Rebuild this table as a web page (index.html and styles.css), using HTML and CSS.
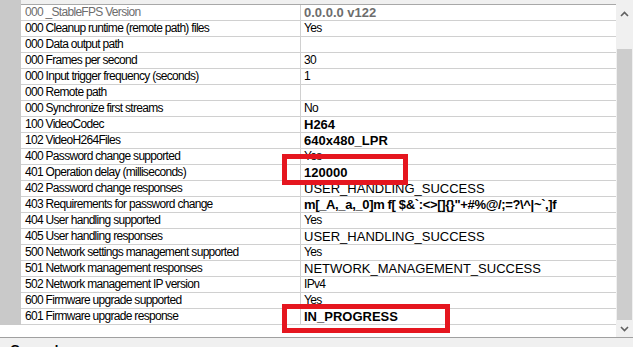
FILE: index.html
```html
<!DOCTYPE html>
<html>
<head>
<meta charset="utf-8">
<link rel="stylesheet" href="styles.css">
</head>
<body>
<div class="window">
  <div class="main">
    <div class="grid">
      <div class="topstrip"><div class="gut"></div><div class="topline"></div></div>
      <div class="row ro"><div class="gut"></div><div class="name">000 _StableFPS Version</div><div class="val b">0.0.0.0 v122</div></div>
      <div class="row"><div class="gut"></div><div class="name">000 Cleanup runtime (remote path) files</div><div class="val">Yes</div></div>
      <div class="row"><div class="gut"></div><div class="name">000 Data output path</div><div class="val"></div></div>
      <div class="row"><div class="gut"></div><div class="name">000 Frames per second</div><div class="val">30</div></div>
      <div class="row"><div class="gut"></div><div class="name">000 Input trigger frequency (seconds)</div><div class="val">1</div></div>
      <div class="row"><div class="gut"></div><div class="name">000 Remote path</div><div class="val"></div></div>
      <div class="row"><div class="gut"></div><div class="name">000 Synchronize first streams</div><div class="val">No</div></div>
      <div class="row"><div class="gut"></div><div class="name">100 VideoCodec</div><div class="val b">H264</div></div>
      <div class="row"><div class="gut"></div><div class="name">102 VideoH264Files</div><div class="val b">640x480_LPR</div></div>
      <div class="row"><div class="gut"></div><div class="name">400 Password change supported</div><div class="val">Yes</div></div>
      <div class="row"><div class="gut"></div><div class="name">401 Operation delay (milliseconds)</div><div class="val b">120000</div></div>
      <div class="row"><div class="gut"></div><div class="name">402 Password change responses</div><div class="val caps">USER_HANDLING_SUCCESS</div></div>
      <div class="row"><div class="gut"></div><div class="name">403 Requirements for password change</div><div class="val b tight">m[_A,_a,_0]m f[ $&amp;`:&lt;&gt;[]{}"+#%@/;=?\^|~`,]f</div></div>
      <div class="row"><div class="gut"></div><div class="name">404 User handling supported</div><div class="val">Yes</div></div>
      <div class="row"><div class="gut"></div><div class="name">405 User handling responses</div><div class="val caps">USER_HANDLING_SUCCESS</div></div>
      <div class="row"><div class="gut"></div><div class="name">500 Network settings management supported</div><div class="val">Yes</div></div>
      <div class="row"><div class="gut"></div><div class="name">501 Network management responses</div><div class="val caps">NETWORK_MANAGEMENT_SUCCESS</div></div>
      <div class="row"><div class="gut"></div><div class="name">502 Network management IP version</div><div class="val">IPv4</div></div>
      <div class="row"><div class="gut"></div><div class="name">600 Firmware upgrade supported</div><div class="val">Yes</div></div>
      <div class="row"><div class="gut"></div><div class="name">601 Firmware upgrade response</div><div class="val b">IN_PROGRESS</div></div>
      <div class="filler"></div>
    </div>
    <div class="scrollbar">
      <div class="sb-btn">
        <svg width="9" height="6" viewBox="0 0 9 6"><path d="M1 5 L4.5 1.5 L8 5" fill="none" stroke="#606060" stroke-width="1.6"/></svg>
      </div>
      <div class="sb-track"><div class="sb-thumb"></div></div>
      <div class="sb-btn">
        <svg width="9" height="6" viewBox="0 0 9 6"><path d="M1 1 L4.5 4.5 L8 1" fill="none" stroke="#606060" stroke-width="1.6"/></svg>
      </div>
    </div>
  </div>
  <div class="desc">
    <div class="desc-title">General</div>
  </div>
  <div class="mark mark1"></div>
  <div class="mark mark2"></div>
</div>
</body>
</html>
```

FILE: styles.css
```css
* { box-sizing: border-box; }
html, body { margin: 0; padding: 0; }
body {
  width: 633px;
  height: 347px;
  overflow: hidden;
  background: #f0f0f0;
  font-family: "Liberation Sans", Arial, sans-serif;
  font-size: 12px;
  color: #000;
}
.window {
  position: relative;
  width: 633px;
  height: 347px;
  display: flex;
  flex-direction: column;
}
.main {
  display: flex;
  height: 337px;
  background: #fff;
}
.grid {
  width: 616px;
  display: flex;
  flex-direction: column;
}
.topstrip {
  display: flex;
  height: 5px;
}
.topstrip .gut {
  width: 21px;
  background: #c9c9c9;
}
.topline {
  flex: 1;
  background: #f0f0f0;
  border-bottom: 1px solid #a8a8a8;
}
.row {
  display: flex;
  height: 16px;
}
.gut {
  width: 21px;
  flex: none;
  background: #c9c9c9;
}
.name {
  width: 280px;
  flex: none;
  padding-left: 4px;
  border-right: 1px solid #d0d0d0;
  border-bottom: 1px solid #d0d0d0;
  line-height: 15px;
  letter-spacing: -0.7px;
  white-space: nowrap;
  overflow: hidden;
}
.val {
  flex: 1;
  padding-left: 3px;
  border-bottom: 1px solid #d0d0d0;
  line-height: 15px;
  letter-spacing: -0.7px;
  white-space: nowrap;
  overflow: hidden;
}
.val.b {
  font-weight: bold;
  font-size: 13px;
  letter-spacing: 0;
}
.val.b.tight { letter-spacing: -0.35px; }
.val.caps {
  font-size: 13px;
  letter-spacing: 0;
}
.ro .name { color: #6d6d6d; }
.ro .val { color: #6d6d6d; }
.filler { flex: 1; background: #fff; }
.scrollbar {
  width: 17px;
  display: flex;
  flex-direction: column;
  background: #f0f0f0;
  padding-top: 5px;
}
.sb-btn {
  height: 17px;
  display: flex;
  align-items: center;
  justify-content: center;
}
.sb-track {
  flex: 1;
  display: flex;
  flex-direction: column;
  padding: 27px 1px 0 1px;
}
.sb-thumb {
  height: 271px;
  background: #cdcdcd;
}
.desc {
  flex: 1;
  border-top: 1px solid #a0a0a0;
  background: #f0f0f0;
  padding: 4px 0 0 10px;
}
.desc-title {
  font-weight: bold;
  font-size: 13px;
  line-height: 15px;
}
.mark {
  position: absolute;
  border: 5px solid #e5161f;
}
.mark1 { left: 282px; top: 154px; width: 126px; height: 31px; }
.mark2 { left: 282px; top: 304px; width: 168px; height: 29px; }
```
